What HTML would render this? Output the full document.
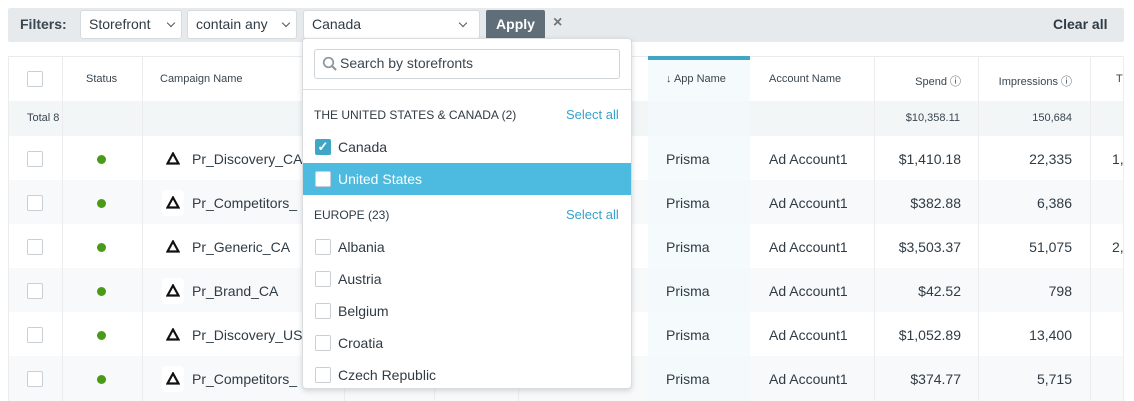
<!DOCTYPE html><html><head><style>
*{box-sizing:border-box;margin:0;padding:0}
body{width:1134px;height:401px;overflow:hidden;background:#fff;font-family:"Liberation Sans",sans-serif;color:#2f3b45;position:relative}
.a{position:absolute}
.bar{left:8px;top:8px;width:1116px;height:34px;background:#e6eaec;border-radius:2px}
.sel{top:10px;height:29px;background:#fff;border:1px solid #d6dbde;border-radius:3px;font-size:14px;line-height:27px;padding-left:8px;color:#2f3b45}
.chev{position:absolute;top:9px;width:6px;height:6px;border-right:1.5px solid #556;border-bottom:1.5px solid #556;transform:rotate(45deg)}
.vl{width:1px;background:#ececec}
.hd{font-size:11px;color:#3a4650;top:73px}
.cb{width:16px;height:16px;border:1px solid #c9cfd3;border-radius:2px;background:#fff}
.dot{width:9px;height:9px;border-radius:50%;background:#4a9a1a}
.ic{width:22px;height:26px;background:#fff;border-radius:4px}
.ic svg{position:absolute;left:4px;top:6px}
.t{font-size:14px}
.r{text-align:right}
</style></head><body>
<div class="a bar"></div>
<div class="a" style="left:20px;top:16px;font-size:14px;font-weight:bold;color:#3a4650">Filters:</div>
<div class="a sel" style="left:80px;width:102px">Storefront<span class="chev" style="left:87px"></span></div>
<div class="a sel" style="left:187px;width:110px">contain any<span class="chev" style="left:95px"></span></div>
<div class="a sel" style="left:303px;width:177px">Canada<span class="chev" style="left:156px"></span></div>
<div class="a" style="left:486px;top:10px;width:59px;height:29px;background:#5f6e78;color:#fff;font-weight:bold;font-size:14px;line-height:29px;text-align:center;border-radius:2px">Apply</div>
<div class="a" style="left:553px;top:14px;font-size:16px;font-weight:bold;color:#6a7680">×</div>
<div class="a" style="left:1053px;top:16px;font-size:14px;font-weight:bold;color:#2f3b45">Clear all</div>

<div class="a" style="left:8px;top:56px;width:1116px;height:345px;border-top:1px solid #e8ebed"></div>
<div class="a" style="left:8px;top:101px;width:1116px;height:35px;background:#f2f6f7"></div>
<div class="a" style="left:8px;top:180px;width:1116px;height:44px;background:#f7f9fa"></div>
<div class="a" style="left:8px;top:268px;width:1116px;height:44px;background:#f7f9fa"></div>
<div class="a" style="left:8px;top:356px;width:1116px;height:45px;background:#f7f9fa"></div>
<div class="a" style="left:648px;top:56px;width:102px;height:345px;background:#f3f9fb;opacity:.8"></div>
<div class="a" style="left:648px;top:56px;width:102px;height:4px;background:#3fa6c6"></div>
<div class="a vl" style="left:8px;top:56px;height:345px"></div>
<div class="a vl" style="left:62px;top:56px;height:345px"></div>
<div class="a vl" style="left:142px;top:56px;height:345px"></div>
<div class="a vl" style="left:344px;top:56px;height:345px"></div>
<div class="a vl" style="left:434px;top:56px;height:345px"></div>
<div class="a vl" style="left:518px;top:56px;height:345px"></div>
<div class="a vl" style="left:874px;top:56px;height:345px"></div>
<div class="a vl" style="left:978px;top:56px;height:345px"></div>
<div class="a vl" style="left:1090px;top:56px;height:345px"></div>
<div class="a vl" style="left:1123px;top:56px;height:345px"></div>

<div class="a cb" style="left:27px;top:71px"></div>
<div class="a hd" style="left:86px">Status</div>
<div class="a hd" style="left:160px">Campaign Name</div>
<div class="a hd" style="left:666px">↓ App Name</div>
<div class="a hd" style="left:769px">Account Name</div>
<div class="a hd r" style="left:880px;width:81px">Spend ⓘ</div>
<div class="a hd r" style="left:980px;width:92px">Impressions ⓘ</div>
<div class="a hd" style="left:1116px">T</div>
<div class="a" style="left:27px;top:112px;font-size:11px;color:#3a4650">Total 8</div>
<div class="a r" style="left:880px;top:112px;width:80px;font-size:11px;color:#3a4650">$10,358.11</div>
<div class="a r" style="left:990px;top:112px;width:82px;font-size:11px;color:#3a4650">150,684</div>

<div class="a cb" style="left:27px;top:151px"></div><div class="a dot" style="left:97px;top:155px"></div><div class="a ic" style="left:162px;top:146px"><svg width="14" height="13"><path d="M7 1.5L12.5 11.5H1.5Z" fill="none" stroke="#111" stroke-width="2.2" stroke-linejoin="miter"/></svg></div><div class="a t" style="left:192px;top:151px">Pr_Discovery_CA</div>
<div class="a t" style="left:666px;top:151px">Prisma</div><div class="a t" style="left:769px;top:151px">Ad Account1</div><div class="a t r" style="left:880px;top:151px;width:81px">$1,410.18</div><div class="a t r" style="left:990px;top:151px;width:82px">22,335</div><div class="a t" style="left:1112px;top:151px">1,</div>

<div class="a cb" style="left:27px;top:195px"></div><div class="a dot" style="left:97px;top:199px"></div><div class="a ic" style="left:162px;top:190px"><svg width="14" height="13"><path d="M7 1.5L12.5 11.5H1.5Z" fill="none" stroke="#111" stroke-width="2.2"/></svg></div><div class="a t" style="left:192px;top:195px">Pr_Competitors_</div>
<div class="a t" style="left:666px;top:195px">Prisma</div><div class="a t" style="left:769px;top:195px">Ad Account1</div><div class="a t r" style="left:880px;top:195px;width:81px">$382.88</div><div class="a t r" style="left:990px;top:195px;width:82px">6,386</div>

<div class="a cb" style="left:27px;top:239px"></div><div class="a dot" style="left:97px;top:243px"></div><div class="a ic" style="left:162px;top:234px"><svg width="14" height="13"><path d="M7 1.5L12.5 11.5H1.5Z" fill="none" stroke="#111" stroke-width="2.2"/></svg></div><div class="a t" style="left:192px;top:239px">Pr_Generic_CA</div>
<div class="a t" style="left:666px;top:239px">Prisma</div><div class="a t" style="left:769px;top:239px">Ad Account1</div><div class="a t r" style="left:880px;top:239px;width:81px">$3,503.37</div><div class="a t r" style="left:990px;top:239px;width:82px">51,075</div><div class="a t" style="left:1112px;top:239px">2,</div>

<div class="a cb" style="left:27px;top:283px"></div><div class="a dot" style="left:97px;top:287px"></div><div class="a ic" style="left:162px;top:278px"><svg width="14" height="13"><path d="M7 1.5L12.5 11.5H1.5Z" fill="none" stroke="#111" stroke-width="2.2"/></svg></div><div class="a t" style="left:192px;top:283px">Pr_Brand_CA</div>
<div class="a t" style="left:666px;top:283px">Prisma</div><div class="a t" style="left:769px;top:283px">Ad Account1</div><div class="a t r" style="left:880px;top:283px;width:81px">$42.52</div><div class="a t r" style="left:990px;top:283px;width:82px">798</div>

<div class="a cb" style="left:27px;top:327px"></div><div class="a dot" style="left:97px;top:331px"></div><div class="a ic" style="left:162px;top:322px"><svg width="14" height="13"><path d="M7 1.5L12.5 11.5H1.5Z" fill="none" stroke="#111" stroke-width="2.2"/></svg></div><div class="a t" style="left:192px;top:327px">Pr_Discovery_US</div>
<div class="a t" style="left:666px;top:327px">Prisma</div><div class="a t" style="left:769px;top:327px">Ad Account1</div><div class="a t r" style="left:880px;top:327px;width:81px">$1,052.89</div><div class="a t r" style="left:990px;top:327px;width:82px">13,400</div>

<div class="a cb" style="left:27px;top:371px"></div><div class="a dot" style="left:97px;top:375px"></div><div class="a ic" style="left:162px;top:366px"><svg width="14" height="13"><path d="M7 1.5L12.5 11.5H1.5Z" fill="none" stroke="#111" stroke-width="2.2"/></svg></div><div class="a t" style="left:192px;top:371px">Pr_Competitors_</div>
<div class="a t" style="left:666px;top:371px">Prisma</div><div class="a t" style="left:769px;top:371px">Ad Account1</div><div class="a t r" style="left:880px;top:371px;width:81px">$374.77</div><div class="a t r" style="left:990px;top:371px;width:82px">5,715</div>

<div class="a" style="left:302px;top:38px;width:330px;height:351px;background:#fff;border:1px solid #d9dde0;border-radius:4px;box-shadow:0 2px 6px rgba(0,0,0,.15)">
<div class="a" style="left:11px;top:10px;width:306px;height:30px;border:1px solid #cfd5d9;border-radius:3px"></div>
<svg class="a" style="left:19px;top:17px" width="16" height="16" viewBox="0 0 16 16"><circle cx="6.5" cy="6.5" r="4.8" fill="none" stroke="#8a96a0" stroke-width="1.7"/><line x1="10" y1="10" x2="14" y2="14" stroke="#8a96a0" stroke-width="2"/></svg>
<div class="a" style="left:37px;top:16px;font-size:14px;color:#3a4650">Search by storefronts</div>
<div class="a" style="left:0;top:50px;width:328px;height:1px;background:#d9dde0"></div>
<div class="a" style="left:11px;top:69px;font-size:12px;color:#2f3b45">THE UNITED STATES &amp; CANADA (2)</div>
<div class="a" style="left:263px;top:68px;font-size:13px;color:#35a2c9">Select all</div>
<div class="a" style="left:12px;top:100px;width:16px;height:16px;background:#3fa6c6;border-radius:2px;color:#fff;font-size:13px;line-height:16px;text-align:center;font-weight:bold">✓</div>
<div class="a t" style="left:35px;top:100px">Canada</div>
<div class="a" style="left:0;top:124px;width:328px;height:32px;background:#4dbadf"></div>
<div class="a cb" style="left:12px;top:132px"></div>
<div class="a t" style="left:35px;top:132px;color:#fff">United States</div>
<div class="a" style="left:11px;top:169px;font-size:12px;color:#2f3b45">EUROPE (23)</div>
<div class="a" style="left:263px;top:168px;font-size:13px;color:#35a2c9">Select all</div>
<div class="a cb" style="left:12px;top:200px"></div><div class="a t" style="left:35px;top:200px">Albania</div>
<div class="a cb" style="left:12px;top:232px"></div><div class="a t" style="left:35px;top:232px">Austria</div>
<div class="a cb" style="left:12px;top:264px"></div><div class="a t" style="left:35px;top:264px">Belgium</div>
<div class="a cb" style="left:12px;top:296px"></div><div class="a t" style="left:35px;top:296px">Croatia</div>
<div class="a cb" style="left:12px;top:328px"></div><div class="a t" style="left:35px;top:328px">Czech Republic</div>
</div>
</body></html>
